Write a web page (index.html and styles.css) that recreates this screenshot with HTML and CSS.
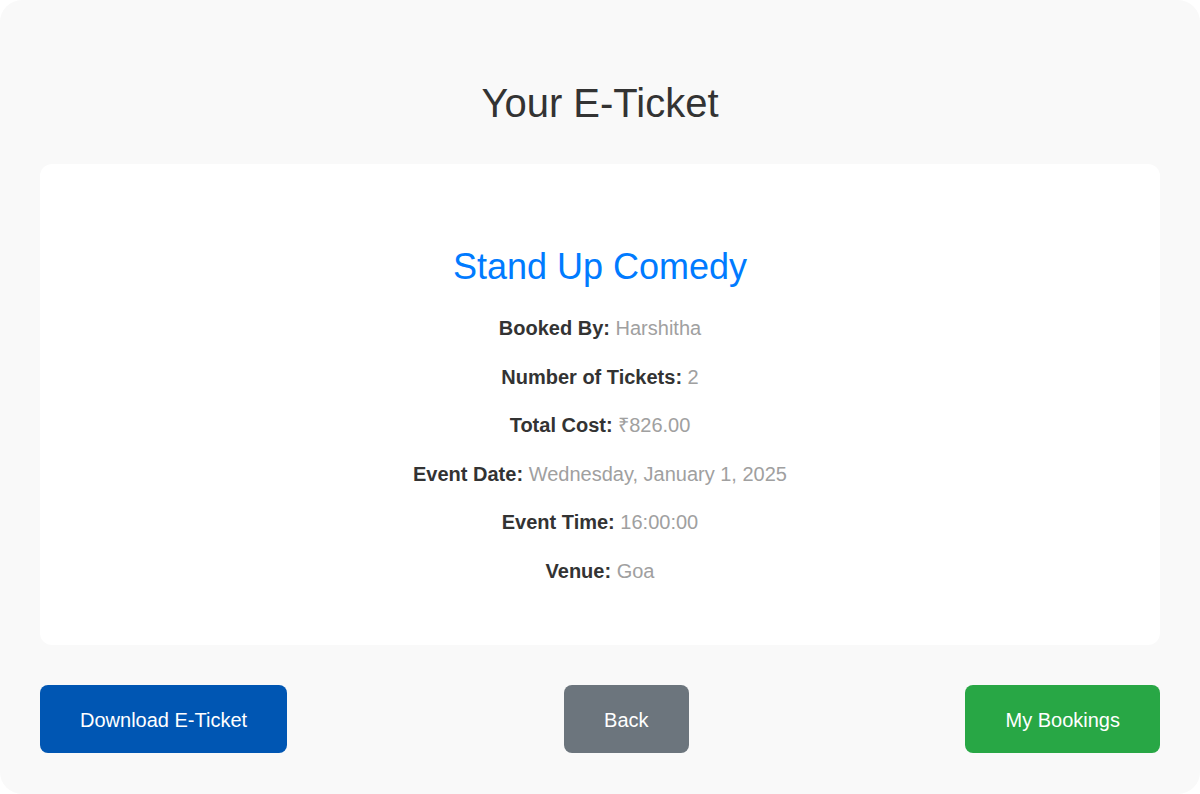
FILE: index.html
```html
<!DOCTYPE html>
<html lang="en">
<head>
<meta charset="utf-8">
<title>Your E-Ticket</title>
<link rel="stylesheet" href="styles.css">
</head>
<body>
<div class="page">
  <h1 class="page-title">Your E-Ticket</h1>
  <div class="ticket">
    <h2 class="event-name">Stand Up Comedy</h2>
    <p class="row"><strong>Booked By:</strong> <span class="val">Harshitha</span></p>
    <p class="row"><strong>Number of Tickets:</strong> <span class="val">2</span></p>
    <p class="row"><strong>Total Cost:</strong> <span class="val">₹826.00</span></p>
    <p class="row"><strong>Event Date:</strong> <span class="val">Wednesday, January 1, 2025</span></p>
    <p class="row"><strong>Event Time:</strong> <span class="val">16:00:00</span></p>
    <p class="row"><strong>Venue:</strong> <span class="val">Goa</span></p>
  </div>
  <div class="actions">
    <button class="btn btn-blue">Download E-Ticket</button>
    <button class="btn btn-gray">Back</button>
    <button class="btn btn-green">My Bookings</button>
  </div>
</div>
</body>
</html>
```
FILE: styles.css
```css
html, body {
  margin: 0;
  padding: 0;
  background: #ffffff;
}
body {
  font-family: "Liberation Sans", Arial, sans-serif;
}
.page {
  box-sizing: border-box;
  width: 1200px;
  height: 794px;
  background: #f9f9f9;
  border-radius: 22px;
  padding: 40px 40px 41px;
  display: flex;
  flex-direction: column;
}
.page-title {
  margin: 40px 0 38px;
  font-size: 40px;
  line-height: 46px;
  font-weight: normal;
  color: #333333;
  text-align: center;
}
.ticket {
  background: #ffffff;
  border-radius: 12px;
  padding: 40px;
  text-align: center;
}
.event-name {
  margin: 42px 0 27px;
  font-size: 36px;
  line-height: 41px;
  font-weight: normal;
  color: #007bff;
}
.row {
  margin: 20px 0;
  font-size: 20px;
  line-height: 28.6px;
  color: #333333;
}
.row:last-child {
  margin-bottom: 19px;
}
.row strong {
  font-weight: bold;
  color: #333333;
}
.val {
  color: #a0a0a0;
}
.actions {
  margin-top: 40px;
  display: flex;
  justify-content: space-between;
}
.btn {
  height: 68px;
  padding: 3px 40px 0;
  border: none;
  border-radius: 8px;
  font-family: "Liberation Sans", Arial, sans-serif;
  font-size: 20px;
  color: #ffffff;
  cursor: pointer;
}
.btn-blue { background: #0056b3; }
.btn-gray { background: #6c757d; }
.btn-green { background: #28a745; }
```
